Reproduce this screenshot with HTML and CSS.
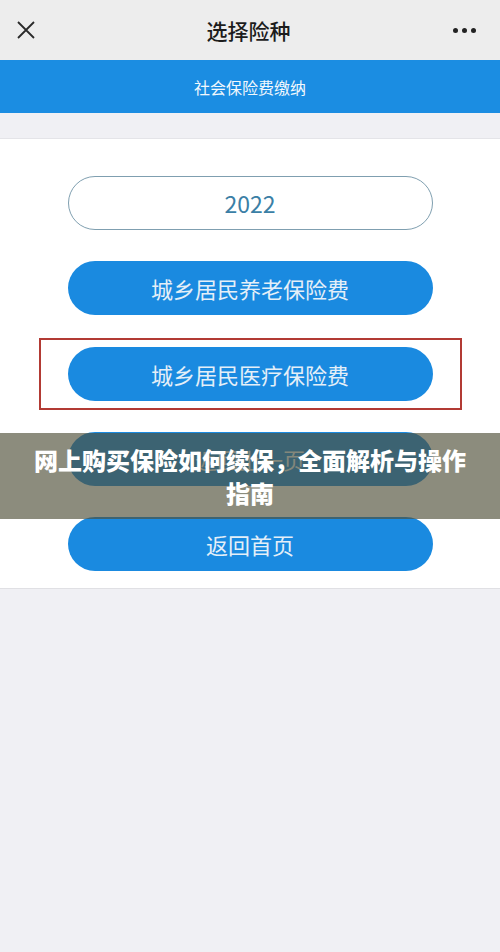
FILE: index.html
```html
<!DOCTYPE html>
<html lang="zh-CN">
<head>
    <meta charset="UTF-8">
    <meta name="viewport" content="width=device-width, initial-scale=1.0">
    <title>选择险种</title>
    <link rel="stylesheet" href="styles.css">
</head>
<body>
    <header class="topbar">
        <svg class="close" width="20" height="20" viewBox="0 0 20 20">
            <path d="M2 2 L18 18 M18 2 L2 18" stroke="#2a2a2a" stroke-width="1.8" fill="none"/>
        </svg>
        <h1>选择险种</h1>
        <div class="more"><span></span><span></span><span></span></div>
    </header>

    <div class="tabbar">社会保险费缴纳</div>

    <main class="panel">
        <div class="btn outline">2022</div>
        <div class="btn">城乡居民养老保险费</div>
        <div class="highlight">
            <div class="btn">城乡居民医疗保险费</div>
        </div>
        <div class="btn">返回上一页</div>
        <div class="btn">返回首页</div>
    </main>

    <div class="banner">网上购买保险如何续保，全面解析与操作指南</div>
</body>
</html>
```

FILE: styles.css
```css
body {
    margin: 0;
    font-family: "Noto Sans CJK SC", "Noto Sans", sans-serif;
    background-color: #f0f0f4;
    min-height: 952px;
    position: relative;
}
.topbar {
    height: 60px;
    background-color: #ededed;
    display: flex;
    align-items: center;
    justify-content: space-between;
    padding: 0 24px 0 16px;
}
.topbar h1 {
    margin: 0;
    font-size: 21px;
    font-weight: 500;
    color: #1c1c1c;
    padding-left: 8px;
}
.close {
    display: block;
}
.more {
    display: flex;
    gap: 4px;
}
.more span {
    width: 5px;
    height: 5px;
    border-radius: 50%;
    background-color: #222;
}
.tabbar {
    height: 53px;
    background-color: #1b8de2;
    color: #f2f8fd;
    font-size: 16px;
    display: flex;
    align-items: center;
    justify-content: center;
}
.panel {
    margin-top: 25px;
    background-color: #fff;
    border-top: 1px solid #e4e4e8;
    border-bottom: 1px solid #e0e0e4;
    padding: 37px 0 17px;
    display: flex;
    flex-direction: column;
    align-items: center;
    gap: 31px;
}
.btn {
    width: 365px;
    height: 54px;
    border-radius: 27px;
    background-color: #1a8ae0;
    color: #e4eff8;
    font-size: 22px;
    display: flex;
    align-items: center;
    justify-content: center;
    box-sizing: border-box;
}
.btn.outline {
    background-color: #fff;
    border: 1.5px solid #7f9fb0;
    color: #3b7fa6;
    font-size: 23px;
}
.highlight {
    width: 423px;
    height: 72px;
    box-sizing: border-box;
    border: 2px solid #b23a34;
    display: flex;
    align-items: center;
    justify-content: center;
    margin: -8px 0 -9px;
}
.banner {
    position: absolute;
    left: 0;
    right: 0;
    top: 433px;
    height: 86px;
    box-sizing: border-box;
    padding: 10px 30px 0;
    background-color: rgba(78, 78, 56, 0.65);
    color: #fff;
    font-size: 24px;
    font-weight: 900;
    line-height: 33px;
    text-align: center;
}
```
